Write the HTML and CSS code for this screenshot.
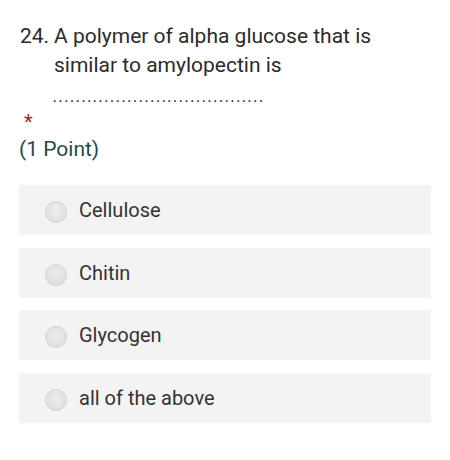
FILE: index.html
```html
<!DOCTYPE html>
<html>
<head>
<meta charset="utf-8">
<link rel="stylesheet" href="styles.css">
</head>
<body>
<div class="question">
  <div class="title">
    <span class="num">24.</span>
    <div class="text">
      <div>A polymer of alpha glucose that is similar to amylopectin is</div>
      <div class="dots">.....................................</div>
    </div>
  </div>
  <div class="req">*</div>
  <div class="points">(1 Point)</div>
  <div class="options">
    <label class="opt"><span class="radio"></span><span>Cellulose</span></label>
    <label class="opt"><span class="radio"></span><span>Chitin</span></label>
    <label class="opt"><span class="radio"></span><span>Glycogen</span></label>
    <label class="opt"><span class="radio"></span><span>all of the above</span></label>
  </div>
</div>
</body>
</html>
```
FILE: styles.css
```css
html, body {
  margin: 0;
  padding: 0;
  background: #fff;
}
body {
  font-family: Roboto, "Noto Sans", sans-serif;
  color: #333;
  width: 450px;
  height: 460px;
  overflow: hidden;
}
.question {
  padding: 22px 19px 0 19px;
}
.title {
  display: flex;
  font-size: 21px;
  line-height: 29px;
  color: #2b2b2b;
}
.num {
  width: 34px;
  flex: none;
  padding-left: 1px;
}
.text {
  width: 345px;
}
.dots {
  font-size: 12px;
  font-weight: bold;
  line-height: 14px;
  letter-spacing: 2.25px;
  margin-top: 11px;
  margin-left: -1px;
  color: #333;
}
.req {
  color: #a4262c;
  font-size: 20px;
  line-height: 20px;
  margin-top: 7px;
  padding-left: 5px;
}
.points {
  color: #1f4b47;
  font-size: 21px;
  line-height: 28px;
  margin-top: 3px;
}
.options {
  display: flex;
  flex-direction: column;
  gap: 12.5px;
  margin-top: 22px;
}
.opt {
  display: flex;
  align-items: center;
  height: 50px;
  background: #f3f3f3;
  font-size: 20px;
  color: #333;
  padding-left: 26px;
  gap: 12px;
}
.radio {
  width: 22px;
  height: 22px;
  border-radius: 50%;
  border: 1px solid #d3d3d3;
  background: radial-gradient(circle at 50% 40%, #ececec 0%, #e2e2e2 60%, #d6d6d6 100%);
  box-sizing: border-box;
  flex: none;
  margin-top: 4px;
}
```
